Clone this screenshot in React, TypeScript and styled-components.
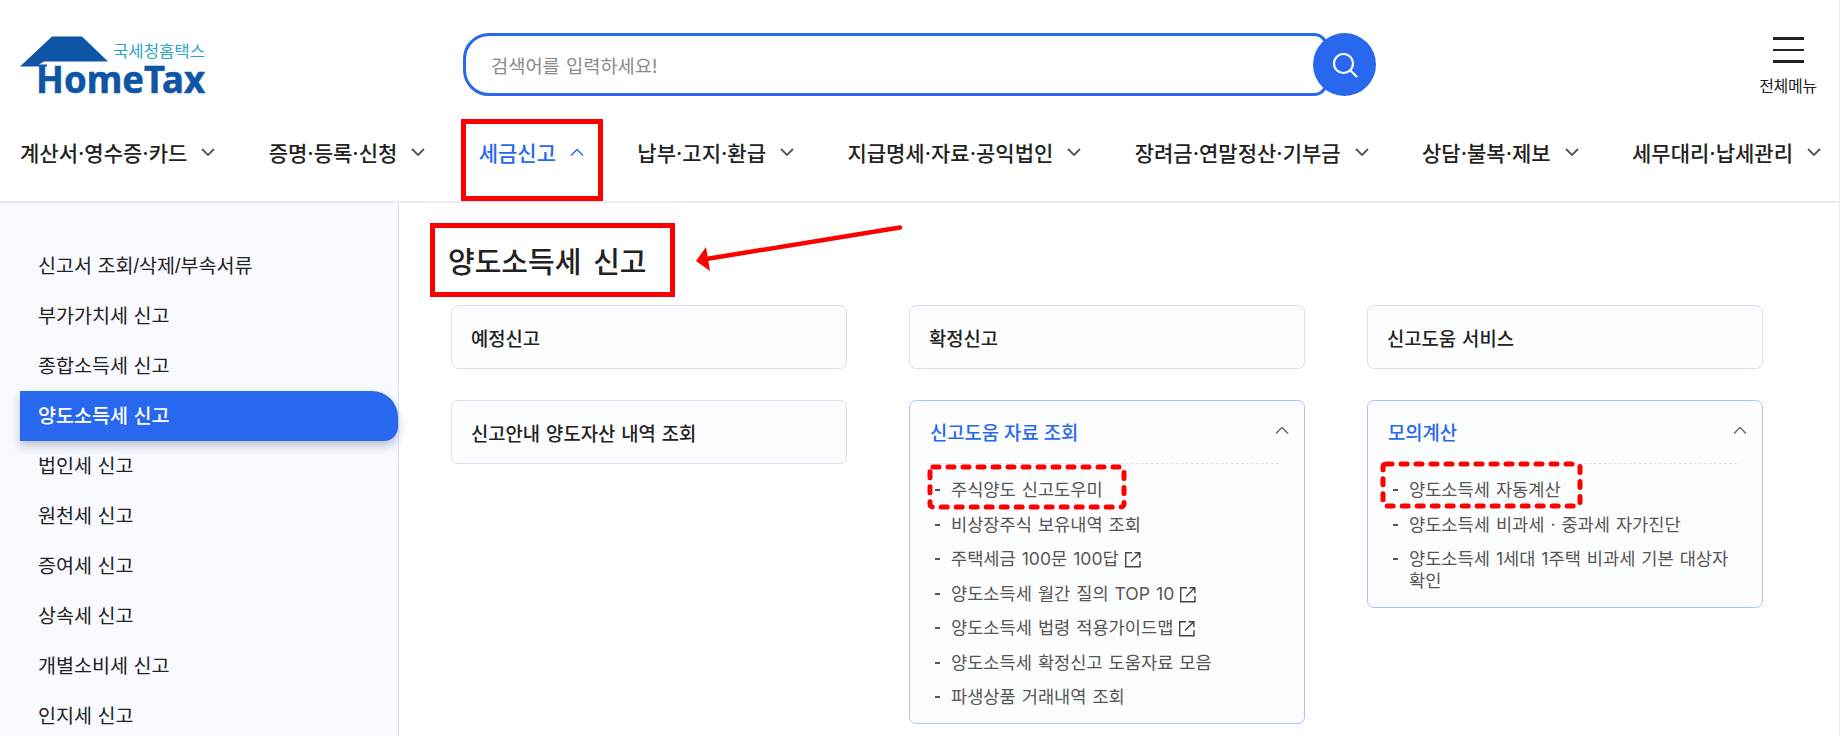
import React, { FC } from 'react';
import styled, { createGlobalStyle } from 'styled-components';

const BLUE = '#2768ee';
const RED = '#ff0000';

const GlobalStyle = createGlobalStyle`
  html, body {
    margin: 0;
    padding: 0;
    height: 100%;
    overflow: hidden;
    background: #fff;
  }
  * {
    box-sizing: border-box;
  }
  body {
    font-family: Inter, 'Noto Sans CJK KR', 'Noto Sans', sans-serif;
    color: #222;
  }
`;

const Page = styled.div`
  width: 1840px;
  height: 736px;
  border-right: 1px solid #ececec;
  display: flex;
  flex-direction: column;
  overflow: hidden;
`;

const TopRow = styled.div`
  display: flex;
  align-items: center;
  height: 119px;
  padding: 10px 20px 0;
`;

const LogoBox = styled.svg`
  flex: none;
  width: 443px;
  height: 76px;
  margin-top: 16px;
`;

const SearchBox = styled.div`
  flex: none;
  display: flex;
  align-items: center;
  width: 865px;
  height: 63px;
  padding-left: 25px;
  border: 3px solid ${BLUE};
  border-radius: 26px 14px 14px 26px;
  font-size: 18.7px;
  word-spacing: 1px;
  color: #8a8a8a;
`;

const SearchButton = styled.button`
  flex: none;
  display: flex;
  align-items: center;
  justify-content: center;
  width: 63px;
  height: 63px;
  margin-left: -15px;
  padding: 0;
  border: none;
  border-radius: 50%;
  background: ${BLUE};
`;

const MenuButton = styled.div`
  margin-left: auto;
  display: flex;
  flex-direction: column;
  align-items: center;
  width: 62px;
  padding-top: 3px;
`;

const MenuLines = styled.div`
  display: flex;
  flex-direction: column;
  justify-content: space-between;
  width: 31px;
  height: 26px;
  margin-bottom: 13px;
`;

const MenuLine = styled.span<{ $thin?: boolean }>`
  display: block;
  height: ${({ $thin }) => ($thin ? 2 : 3)}px;
  background: #222;
`;

const MenuLabel = styled.span`
  font-size: 16px;
  line-height: 20px;
  letter-spacing: -0.3px;
  white-space: nowrap;
`;

const Nav = styled.nav`
  display: flex;
  justify-content: space-between;
  height: 84px;
  padding: 0 18px 0 20px;
  border-bottom: 2px solid #e9ebf0;
`;

const NavItem = styled.div<{ $active?: boolean }>`
  position: relative;
  display: flex;
  align-items: center;
  gap: 14px;
  height: 66px;
  font-size: 21px;
  font-weight: 500;
  white-space: nowrap;
  color: ${({ $active }) => ($active ? BLUE : '#222')};
`;

const NavMark = styled.span`
  position: absolute;
  left: -18px;
  top: 0;
  width: 142px;
  height: 82px;
  border: 5px solid ${RED};
`;

const Body = styled.div`
  flex: 1;
  display: flex;
  min-height: 0;
`;

const Sidebar = styled.aside`
  flex: none;
  width: 399px;
  padding: 36px 0 0 20px;
  background: #f8faff;
  border-right: 1px solid #d9e3f6;
`;

const SideItem = styled.div<{ $active?: boolean }>`
  display: flex;
  align-items: center;
  height: 50px;
  padding-left: 18px;
  font-family: 'Liberation Sans', 'Noto Sans CJK KR', sans-serif;
  font-size: 19.6px;
  font-weight: ${({ $active }) => ($active ? 500 : 400)};
  border-radius: 0 26px 14px 0;
  color: ${({ $active }) => ($active ? '#fff' : '#222')};
  background: ${({ $active }) => ($active ? BLUE : 'transparent')};
  box-shadow: ${({ $active }) => ($active ? '0 5px 10px rgba(30, 50, 90, 0.28)' : 'none')};
  margin: ${({ $active }) => ($active ? '2px 0 -2px' : '0')};
  padding-bottom: ${({ $active }) => ($active ? '4px' : '0')};
`;

const Content = styled.main`
  position: relative;
  flex: 1;
  padding: 20px 0 0 31px;
`;

const Title = styled.h2`
  display: flex;
  align-items: center;
  width: 245px;
  height: 74px;
  margin: 0;
  padding-left: 13px;
  border: 5px solid ${RED};
  font-size: 29px;
  font-weight: 500;
  word-spacing: 4px;
  white-space: nowrap;
  color: #222;
`;

const Arrow = styled.svg`
  position: absolute;
  left: 290px;
  top: 15px;
  width: 220px;
  height: 60px;
`;

const Columns = styled.div`
  display: grid;
  grid-template-columns: repeat(3, 396px);
  column-gap: 62px;
  align-items: start;
  margin: 8px 0 0 21px;
`;

const Column = styled.div`
  display: flex;
  flex-direction: column;
  gap: 31px;
`;

const Card = styled.div`
  display: flex;
  align-items: center;
  height: 64px;
  padding-left: 19px;
  border: 1px solid #d5e0f5;
  border-radius: 7px;
  background: #fcfdff;
  font-size: 18.8px;
  font-weight: 500;
  word-spacing: 1px;
  color: #222;
`;

const OpenCard = styled.div`
  padding: 0 25px 8px 20px;
  border: 1px solid #a9c5f4;
  border-radius: 7px;
  background: #fcfdff;
`;

const OpenHead = styled.div`
  display: flex;
  align-items: center;
  justify-content: space-between;
  height: 63px;
  padding-bottom: 1px;
  border-bottom: 1px dashed #dfe2e8;
  font-size: 18.8px;
  font-weight: 500;
  color: ${BLUE};

  svg {
    margin: 0 -10px 3px 0;
  }
`;

const OpenList = styled.ul`
  list-style: none;
  margin: 0;
  padding: 9px 0 0 5px;
`;

const ListRow = styled.li`
  position: relative;
  padding: 6.25px 0 6.25px 16px;
  font-size: 17.6px;
  line-height: 22px;
  word-spacing: 1px;
  color: #555;

  &::before {
    content: '';
    position: absolute;
    left: 0;
    top: 16px;
    width: 5px;
    height: 2px;
    background: #555;
  }
`;

const LinkIcon = styled.svg`
  display: inline-block;
  width: 17px;
  height: 17px;
  margin-left: 5px;
  vertical-align: -3px;
`;

const DashMark = styled.svg<{ $left: number; $top: number }>`
  position: absolute;
  left: ${({ $left }) => $left}px;
  top: ${({ $top }) => $top}px;
  overflow: visible;
`;

const Chevron: FC<{ up?: boolean; color?: string; size?: number }> = ({ up, color = '#555', size = 14 }) => (
  <svg width={size} height={size * 0.6} viewBox="0 0 14 8.4" fill="none">
    <path d={up ? 'M1 7.4L7 1.4L13 7.4' : 'M1 1L7 7L13 1'} stroke={color} strokeWidth={up ? 1.4 : 1.8} />
  </svg>
);

const ExternalLink: FC = () => (
  <LinkIcon viewBox="0 0 17 17" fill="none" stroke="#444" strokeWidth="1.4">
    <path d="M8 1.7H1.7V15.8H16V10" />
    <path d="M7 10.5L15 2.5M10.5 1.7H15.8V7" />
  </LinkIcon>
);

const Dashes: FC<{ width: number; height: number; left: number; top: number }> = ({ width, height, left, top }) => (
  <DashMark width={width} height={height} $left={left} $top={top}>
    <rect
      x="1"
      y="1"
      width={width - 2}
      height={height - 2}
      rx="3"
      fill="none"
      stroke={RED}
      strokeWidth="5"
      strokeLinecap="round"
      strokeDasharray="6 9"
    />
  </DashMark>
);

const navItems = [
  '계산서·영수증·카드',
  '증명·등록·신청',
  '세금신고',
  '납부·고지·환급',
  '지급명세·자료·공익법인',
  '장려금·연말정산·기부금',
  '상담·불복·제보',
  '세무대리·납세관리',
];

const sideItems = [
  '신고서 조회/삭제/부속서류',
  '부가가치세 신고',
  '종합소득세 신고',
  '양도소득세 신고',
  '법인세 신고',
  '원천세 신고',
  '증여세 신고',
  '상속세 신고',
  '개별소비세 신고',
  '인지세 신고',
];

const guideItems = [
  { label: '주식양도 신고도우미' },
  { label: '비상장주식 보유내역 조회' },
  { label: '주택세금 100문 100답', external: true },
  { label: '양도소득세 월간 질의 TOP 10', external: true },
  { label: '양도소득세 법령 적용가이드맵', external: true },
  { label: '양도소득세 확정신고 도움자료 모음' },
  { label: '파생상품 거래내역 조회' },
];

const calcItems = [
  '양도소득세 자동계산',
  '양도소득세 비과세 · 중과세 자가진단',
  '양도소득세 1세대 1주택 비과세 기본 대상자 확인',
];

const App: FC = () => (
  <Page>
    <GlobalStyle />
    <TopRow>
      <LogoBox viewBox="0 0 443 76">
        <path d="M32 1.5H62L88 26.5H24L19 29.5H27V31.5H0Z" fill="#0f55a5" />
        <text x="93" y="21.5" fontSize="16" fill="#2aa6c6" textLength="92" lengthAdjust="spacingAndGlyphs">
          국세청홈택스
        </text>
        <text
          x="16"
          y="57.5"
          fontSize="38"
          fontWeight="700"
          fontFamily="'Noto Sans', sans-serif"
          fill="#0f55a5"
          stroke="#0f55a5"
          strokeWidth="0.6"
          textLength="169"
          lengthAdjust="spacingAndGlyphs"
        >
          HomeTax
        </text>
      </LogoBox>
      <SearchBox>검색어를 입력하세요!</SearchBox>
      <SearchButton aria-label="검색">
        <svg width="28" height="28" viewBox="0 0 28 28" fill="none" stroke="#fff" strokeWidth="2.2">
          <circle cx="12.5" cy="12.5" r="9.5" />
          <path d="M19.5 19.5L26 26" />
        </svg>
      </SearchButton>
      <MenuButton>
        <MenuLines>
          <MenuLine />
          <MenuLine $thin />
          <MenuLine />
        </MenuLines>
        <MenuLabel>전체메뉴</MenuLabel>
      </MenuButton>
    </TopRow>
    <Nav>
      {navItems.map((item) => {
        const active = item === '세금신고';
        return (
          <NavItem key={item} $active={active}>
            {item}
            <Chevron up={active} color={active ? BLUE : '#555'} />
            {active && <NavMark />}
          </NavItem>
        );
      })}
    </Nav>
    <Body>
      <Sidebar>
        {sideItems.map((item) => (
          <SideItem key={item} $active={item === '양도소득세 신고'}>
            {item}
          </SideItem>
        ))}
      </Sidebar>
      <Content>
        <Title>양도소득세 신고</Title>
        <Arrow viewBox="0 0 220 60">
          <path d="M211 9.5L17 41" stroke={RED} strokeWidth="4.5" strokeLinecap="round" fill="none" />
          <path d="M7 43L17 29L21 53Z" fill={RED} />
        </Arrow>
        <Columns>
          <Column>
            <Card>예정신고</Card>
            <Card>신고안내 양도자산 내역 조회</Card>
          </Column>
          <Column>
            <Card>확정신고</Card>
            <OpenCard>
              <OpenHead>
                신고도움 자료 조회
                <Chevron up color="#666" />
              </OpenHead>
              <OpenList>
                {guideItems.map((item, i) => (
                  <ListRow key={item.label}>
                    {item.label}
                    {item.external && <ExternalLink />}
                    {i === 0 && <Dashes width={196} height={42} left={-6} top={-7} />}
                  </ListRow>
                ))}
              </OpenList>
            </OpenCard>
          </Column>
          <Column>
            <Card>신고도움 서비스</Card>
            <OpenCard>
              <OpenHead>
                모의계산
                <Chevron up color="#666" />
              </OpenHead>
              <OpenList>
                {calcItems.map((item, i) => (
                  <ListRow key={item}>
                    {item}
                    {i === 0 && <Dashes width={199} height={44} left={-11} top={-10} />}
                  </ListRow>
                ))}
              </OpenList>
            </OpenCard>
          </Column>
        </Columns>
      </Content>
    </Body>
  </Page>
);

export default App;
